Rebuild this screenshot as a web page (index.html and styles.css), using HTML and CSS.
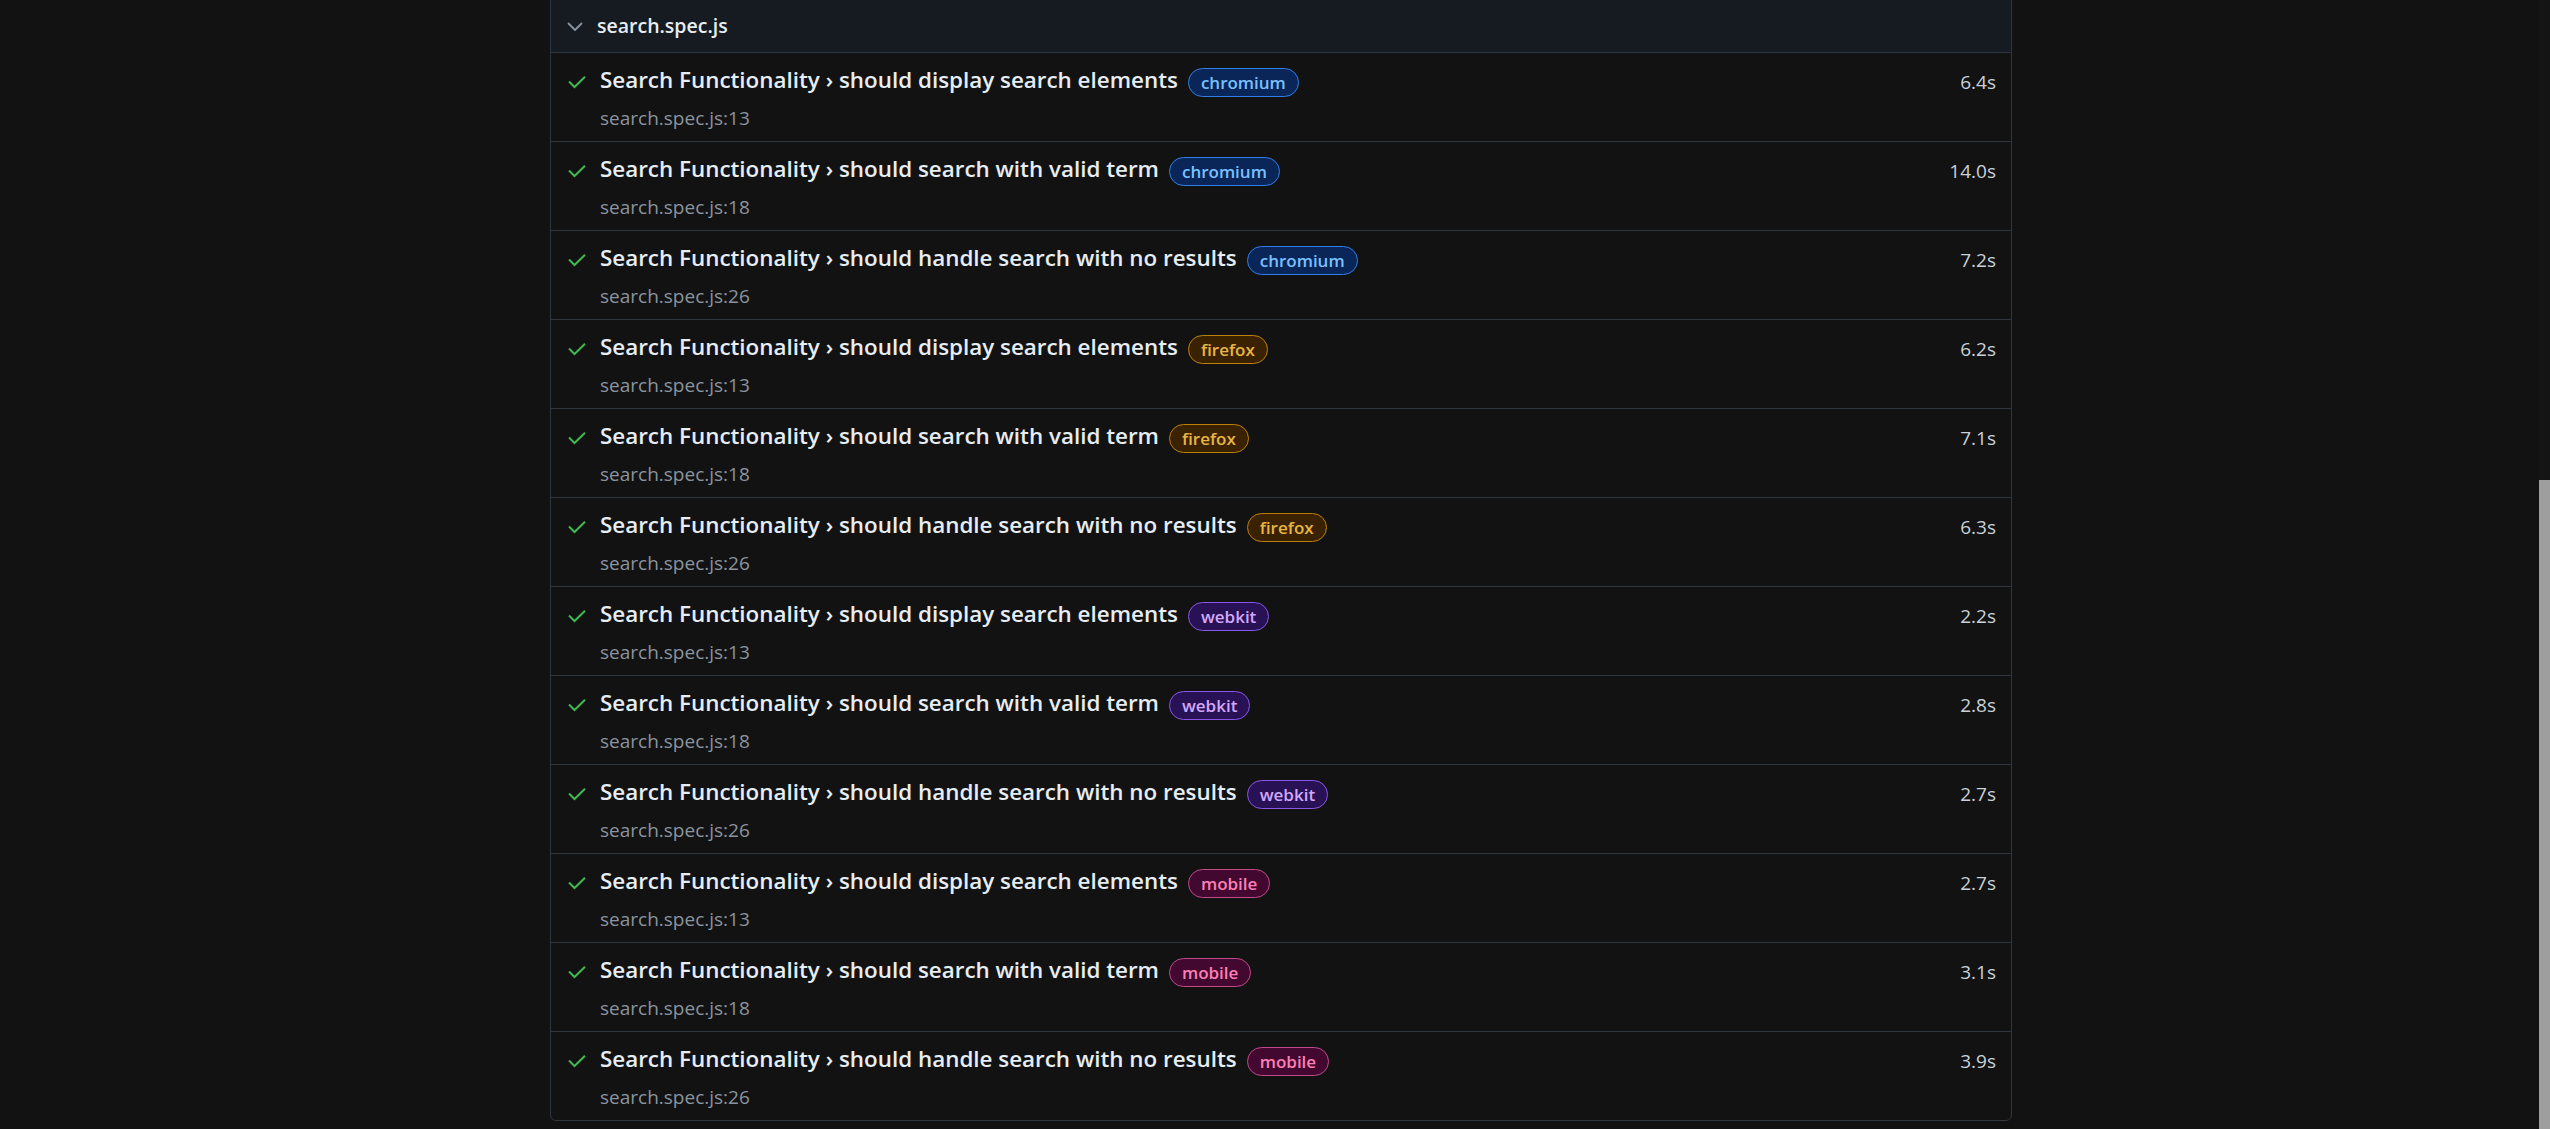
FILE: index.html
```html
<!DOCTYPE html>
<html lang="en">
<head>
<meta charset="utf-8">
<title>search.spec.js</title>
<link rel="stylesheet" href="styles.css">
</head>
<body>
<div class="viewport">
  <main class="page">
    <section class="file-panel">
      <header class="file-header">
        <svg class="chevron" width="16" height="10" viewBox="0 0 16 10"><polyline points="1.5,1.5 8,8 14.5,1.5" fill="none" stroke="#8b949e" stroke-width="1.8" stroke-linecap="round" stroke-linejoin="round"/></svg>
        <span class="file-name">search.spec.js</span>
      </header>

      <div class="row"><svg class="check" width="18" height="18" viewBox="0 0 18 18"><polyline points="1,8.5 6.5,14 17,3.8" fill="none" stroke="#3fb950" stroke-width="2"/></svg><div class="main"><div class="title-line"><span class="title">Search Functionality › should display search elements</span><span class="badge chromium">chromium</span></div><div class="loc">search.spec.js:13</div></div><div class="dur">6.4s</div></div>

      <div class="row"><svg class="check" width="18" height="18" viewBox="0 0 18 18"><polyline points="1,8.5 6.5,14 17,3.8" fill="none" stroke="#3fb950" stroke-width="2"/></svg><div class="main"><div class="title-line"><span class="title">Search Functionality › should search with valid term</span><span class="badge chromium">chromium</span></div><div class="loc">search.spec.js:18</div></div><div class="dur">14.0s</div></div>

      <div class="row"><svg class="check" width="18" height="18" viewBox="0 0 18 18"><polyline points="1,8.5 6.5,14 17,3.8" fill="none" stroke="#3fb950" stroke-width="2"/></svg><div class="main"><div class="title-line"><span class="title">Search Functionality › should handle search with no results</span><span class="badge chromium">chromium</span></div><div class="loc">search.spec.js:26</div></div><div class="dur">7.2s</div></div>

      <div class="row"><svg class="check" width="18" height="18" viewBox="0 0 18 18"><polyline points="1,8.5 6.5,14 17,3.8" fill="none" stroke="#3fb950" stroke-width="2"/></svg><div class="main"><div class="title-line"><span class="title">Search Functionality › should display search elements</span><span class="badge firefox">firefox</span></div><div class="loc">search.spec.js:13</div></div><div class="dur">6.2s</div></div>

      <div class="row"><svg class="check" width="18" height="18" viewBox="0 0 18 18"><polyline points="1,8.5 6.5,14 17,3.8" fill="none" stroke="#3fb950" stroke-width="2"/></svg><div class="main"><div class="title-line"><span class="title">Search Functionality › should search with valid term</span><span class="badge firefox">firefox</span></div><div class="loc">search.spec.js:18</div></div><div class="dur">7.1s</div></div>

      <div class="row"><svg class="check" width="18" height="18" viewBox="0 0 18 18"><polyline points="1,8.5 6.5,14 17,3.8" fill="none" stroke="#3fb950" stroke-width="2"/></svg><div class="main"><div class="title-line"><span class="title">Search Functionality › should handle search with no results</span><span class="badge firefox">firefox</span></div><div class="loc">search.spec.js:26</div></div><div class="dur">6.3s</div></div>

      <div class="row"><svg class="check" width="18" height="18" viewBox="0 0 18 18"><polyline points="1,8.5 6.5,14 17,3.8" fill="none" stroke="#3fb950" stroke-width="2"/></svg><div class="main"><div class="title-line"><span class="title">Search Functionality › should display search elements</span><span class="badge webkit">webkit</span></div><div class="loc">search.spec.js:13</div></div><div class="dur">2.2s</div></div>

      <div class="row"><svg class="check" width="18" height="18" viewBox="0 0 18 18"><polyline points="1,8.5 6.5,14 17,3.8" fill="none" stroke="#3fb950" stroke-width="2"/></svg><div class="main"><div class="title-line"><span class="title">Search Functionality › should search with valid term</span><span class="badge webkit">webkit</span></div><div class="loc">search.spec.js:18</div></div><div class="dur">2.8s</div></div>

      <div class="row"><svg class="check" width="18" height="18" viewBox="0 0 18 18"><polyline points="1,8.5 6.5,14 17,3.8" fill="none" stroke="#3fb950" stroke-width="2"/></svg><div class="main"><div class="title-line"><span class="title">Search Functionality › should handle search with no results</span><span class="badge webkit">webkit</span></div><div class="loc">search.spec.js:26</div></div><div class="dur">2.7s</div></div>

      <div class="row"><svg class="check" width="18" height="18" viewBox="0 0 18 18"><polyline points="1,8.5 6.5,14 17,3.8" fill="none" stroke="#3fb950" stroke-width="2"/></svg><div class="main"><div class="title-line"><span class="title">Search Functionality › should display search elements</span><span class="badge mobile">mobile</span></div><div class="loc">search.spec.js:13</div></div><div class="dur">2.7s</div></div>

      <div class="row"><svg class="check" width="18" height="18" viewBox="0 0 18 18"><polyline points="1,8.5 6.5,14 17,3.8" fill="none" stroke="#3fb950" stroke-width="2"/></svg><div class="main"><div class="title-line"><span class="title">Search Functionality › should search with valid term</span><span class="badge mobile">mobile</span></div><div class="loc">search.spec.js:18</div></div><div class="dur">3.1s</div></div>

      <div class="row"><svg class="check" width="18" height="18" viewBox="0 0 18 18"><polyline points="1,8.5 6.5,14 17,3.8" fill="none" stroke="#3fb950" stroke-width="2"/></svg><div class="main"><div class="title-line"><span class="title">Search Functionality › should handle search with no results</span><span class="badge mobile">mobile</span></div><div class="loc">search.spec.js:26</div></div><div class="dur">3.9s</div></div>
    </section>
  </main>
  <div class="scrollbar"><div class="thumb"></div></div>
</div>
</body>
</html>
```

FILE: styles.css
```css
html, body {
  margin: 0;
  padding: 0;
  background: #121212;
  height: 100%;
  overflow: hidden;
}

body {
  font-family: "Open Sans", "Noto Sans", "Liberation Sans", sans-serif;
  color: #e6edf3;
}

.viewport {
  display: flex;
  height: 1129px;
}

.page {
  flex: 1;
  min-width: 0;
}

.file-panel {
  margin-top: -1px;
  margin-left: 550px;
  width: 1462px;
  box-sizing: border-box;
  border: 1px solid #30363d;
  border-radius: 0 0 6px 6px;
  overflow: hidden;
  background: #121212;
}

.file-header {
  display: flex;
  align-items: center;
  gap: 14px;
  height: 52px;
  box-sizing: content-box;
  padding-left: 16px;
  background: #161b22;
  border-bottom: 1px solid #30363d;
}

.chevron {
  display: block;
  margin-top: 1px;
}

.file-name {
  font-size: 19.5px;
  font-weight: 600;
  color: #e6edf3;
  line-height: 30px;
}

.row {
  display: grid;
  grid-template-columns: 18px 1fr auto;
  column-gap: 14px;
  align-items: start;
  height: 89px;
  box-sizing: border-box;
  padding: 12px 15px 0 17px;
  border-bottom: 1px solid #30363d;
}

.row:last-child {
  border-bottom: none;
  height: 88px;
}

.check {
  display: block;
  margin-top: 8px;
}

.main {
  min-width: 0;
}

.title-line {
  font-size: 22.4px;
  line-height: 30px;
  white-space: nowrap;
}

.title {
  font-weight: 600;
  color: #e6edf3;
}

.badge {
  display: inline-block;
  vertical-align: middle;
  box-sizing: border-box;
  height: 29px;
  line-height: 27px;
  padding: 0 12px;
  margin-left: 10px;
  border: 1px solid;
  border-radius: 15px;
  font-size: 17px;
  font-weight: 600;
}

.badge.chromium {
  background: #0a2557;
  border-color: #2f7fe8;
  color: #79c0ff;
}

.badge.firefox {
  background: #3a2200;
  border-color: #bb8009;
  color: #e8b443;
}

.badge.webkit {
  background: #281255;
  border-color: #8957e5;
  color: #d2a8ff;
}

.badge.mobile {
  background: #420830;
  border-color: #bf4b8a;
  color: #ff7eb6;
}

.loc {
  margin-top: 9px;
  font-size: 19px;
  line-height: 24px;
  color: #8b949e;
}

.dur {
  font-size: 19px;
  line-height: 34px;
  color: #c9d1d9;
  text-align: right;
}

.scrollbar {
  width: 11px;
  flex: none;
  background: #141414;
  padding-top: 480px;
  box-sizing: border-box;
}

.thumb {
  height: 100%;
  background: #9e9e9e;
}
```
